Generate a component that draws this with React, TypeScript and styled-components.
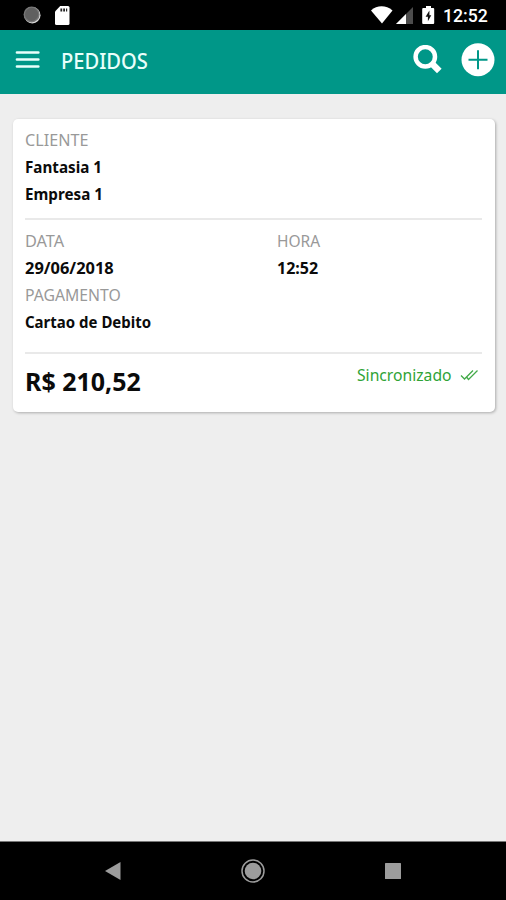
import React from 'react';
import styled, { createGlobalStyle } from 'styled-components';

const GlobalStyle = createGlobalStyle`
  * { box-sizing: border-box; }
  body { margin: 0; background: #eee; font-family: "Noto Sans", sans-serif; }
`;

const Screen = styled.div`
  width: 506px;
  height: 900px;
  display: flex;
  flex-direction: column;
  background: #eeeeee;
  overflow: hidden;
`;

const StatusBar = styled.div`
  height: 30px;
  flex: none;
  display: flex;
  align-items: center;
  padding: 0 18px 0 23px;
  background: #000;
  svg { display: block; flex: none; }
`;

const StatusGroup = styled.div<{ $end?: boolean }>`
  display: flex;
  align-items: center;
  gap: ${(p) => (p.$end ? '7px' : '14px')};
  margin-left: ${(p) => (p.$end ? 'auto' : '0')};
`;

const Clock = styled.span`
  width: 45px;
  padding-top: 2px;
  color: #fff;
  font: 500 18px/30px Roboto, sans-serif;
  white-space: nowrap;
`;

const Toolbar = styled.header`
  height: 64px;
  flex: none;
  display: flex;
  align-items: center;
  padding: 0 11px 5px 15px;
  background: #009788;
  svg { display: block; flex: none; }
`;

const Fit = styled.span<{ $scale?: number }>`
  display: inline-block;
  white-space: nowrap;
  transform: scaleX(${(p) => p.$scale ?? 1});
  transform-origin: left center;
`;

const Title = styled.h1`
  flex: 1;
  margin: 0 0 0 21px;
  color: #e9fffb;
  font-size: 22px;
  font-weight: 500;
  line-height: 30px;
`;

const Actions = styled.div`
  display: flex;
  align-items: center;
  gap: 19px;
`;

const Card = styled.article`
  flex: none;
  height: 293px;
  margin: 25px 11px 0 13px;
  padding: 8px 13px 0 12px;
  background: #fff;
  border-radius: 5px;
  box-shadow: 1px 1px 3px rgba(0, 0, 0, 0.28);
`;

const Section = styled.section<{ $height: number; $top?: number }>`
  height: ${(p) => p.$height}px;
  padding-top: ${(p) => p.$top ?? 0}px;
  border-bottom: 2px solid #e9e9e9;
`;

const Columns = styled.div`
  display: grid;
  grid-template-columns: 252px 1fr;
`;

const Label = styled.div`
  height: 27px;
  color: #999;
  font-size: 16px;
  line-height: 27px;
`;

const Value = styled.div`
  height: 27px;
  color: #0b0b0b;
  font-size: 16px;
  font-weight: 700;
  line-height: 27px;
`;

const Footer = styled.footer`
  display: flex;
  justify-content: space-between;
`;

const Total = styled.div`
  padding-top: 8px;
  color: #0b0b0b;
  font-size: 25px;
  font-weight: 700;
  line-height: 38px;
`;

const Sync = styled.div`
  width: 125px;
  height: 27px;
  margin-top: 8px;
  display: flex;
  align-items: center;
  color: #2fa336;
  font-size: 16px;
  line-height: 27px;
  svg { margin-bottom: 2px; }
`;

const SyncText = styled.div`
  width: 103px;
`;

const NavBar = styled.nav`
  height: 59px;
  flex: none;
  margin-top: auto;
  display: grid;
  grid-template-columns: repeat(3, 140px);
  justify-content: center;
  justify-items: center;
  align-items: center;
  background: #000;
  border-top: 1px solid #777;
  svg { display: block; }
`;

export default function App() {
  return (
    <Screen>
      <GlobalStyle />
      <StatusBar>
        <StatusGroup>
          <svg width="18" height="18" viewBox="0 0 18 18">
            <circle cx="9.300" cy="9.300" r="8.200" fill="#ddd" />
            <circle cx="8.600" cy="8.400" r="8" fill="#777" />
            <circle cx="8.600" cy="8.400" r="6.600" fill="#606060" />
          </svg>
          <svg width="15" height="19" viewBox="0 0 15 19">
            <path d="M5.2 0H13a1.5 1.5 0 0 1 1.500 1.500V17.500A1.500 1.500 0 0 1 13 19H1.500A1.500 1.500 0 0 1 0 17.500V5.500Z" fill="#fff" />
            <path d="M5.400 2.500h1.800v3H5.400zM8.200 2.500H10v3H8.200zM11 2.500h1.200v3H11z" fill="#222" />
          </svg>
        </StatusGroup>
        <StatusGroup $end>
          <svg width="66" height="20" viewBox="0 0 66 20">
            <path d="M1 5.500C7-.1 16-.1 22.500 5.500L12 18.500Z" fill="#fff" />
            <path d="M43 2V19H26Z" fill="#4c4c4c" />
            <path d="M36 9V19H26Z" fill="#fff" />
            <path d="M56 1h5v2h2.200q1 0 1 1V18q0 1-1 1H53.200q-1 0-1-1V4q0-1 1-1H56Z" fill="#fff" />
            <path d="M59.400 5.500 55.600 11.800h2.300v4.500L61.300 10.200h-1.900Z" fill="#111" />
          </svg>
          <Clock><Fit $scale={0.98}>12:52</Fit></Clock>
        </StatusGroup>
      </StatusBar>
      <Toolbar>
        <svg width="25" height="19" viewBox="0 0 25 19" stroke="#e9fffb" strokeWidth="2.700" strokeLinecap="round">
          <path d="M2 2.500H23.300M2 9.500H23.300M2 16.500H23.300" />
        </svg>
        <Title><Fit $scale={0.915}>PEDIDOS</Fit></Title>
        <Actions>
          <svg width="29" height="29" viewBox="0 0 29 29" fill="none" stroke="#fff">
            <circle cx="12.300" cy="11.800" r="9.700" strokeWidth="4.500" />
            <path d="M18.800 18.500 26.300 26" strokeWidth="6.500" />
          </svg>
          <svg width="34" height="34" viewBox="0 0 34 34">
            <circle cx="17" cy="16.700" r="16.500" fill="#fff" />
            <path d="M17 7.200V26.200M7.500 16.700H26.500" stroke="#009788" strokeWidth="2" />
          </svg>
        </Actions>
      </Toolbar>
      <Card>
        <Section $height={93}>
          <Label><Fit $scale={1.01}>CLIENTE</Fit></Label>
          <Value><Fit $scale={0.95}>Fantasia 1</Fit></Value>
          <Value><Fit $scale={0.95}>Empresa 1</Fit></Value>
        </Section>
        <Section $height={134} $top={8}>
          <Columns>
            <div>
              <Label><Fit $scale={1.02}>DATA</Fit></Label>
              <Value><Fit $scale={1.025}>29/06/2018</Fit></Value>
            </div>
            <div>
              <Label><Fit $scale={0.97}>HORA</Fit></Label>
              <Value><Fit>12:52</Fit></Value>
            </div>
          </Columns>
          <Label><Fit $scale={0.985}>PAGAMENTO</Fit></Label>
          <Value><Fit $scale={0.937}>Cartao de Debito</Fit></Value>
        </Section>
        <Footer>
          <Total><Fit>R$ 210,52</Fit></Total>
          <Sync>
            <SyncText><Fit $scale={0.98}>Sincronizado</Fit></SyncText>
            <svg width="19" height="12" viewBox="0 0 19 12" fill="none" stroke="#43aa49" strokeWidth="1.300">
              <path d="M1 6.500 4.500 10 13 1.500M7 8.500 8.500 10.500 17.500 1.500" />
            </svg>
          </Sync>
        </Footer>
      </Card>
      <NavBar>
        <svg width="16" height="18" viewBox="0 0 16 18"><path d="M0 9 15.500 0V18Z" fill="#9c9c9c" /></svg>
        <svg width="24" height="24" viewBox="0 0 24 24">
          <circle cx="12" cy="12" r="11" fill="none" stroke="#9c9c9c" strokeWidth="1.500" />
          <circle cx="12" cy="12" r="8.300" fill="#9c9c9c" />
        </svg>
        <svg width="16" height="16" viewBox="0 0 16 16"><rect width="16" height="16" rx=".5" fill="#9c9c9c" /></svg>
      </NavBar>
    </Screen>
  );
}
